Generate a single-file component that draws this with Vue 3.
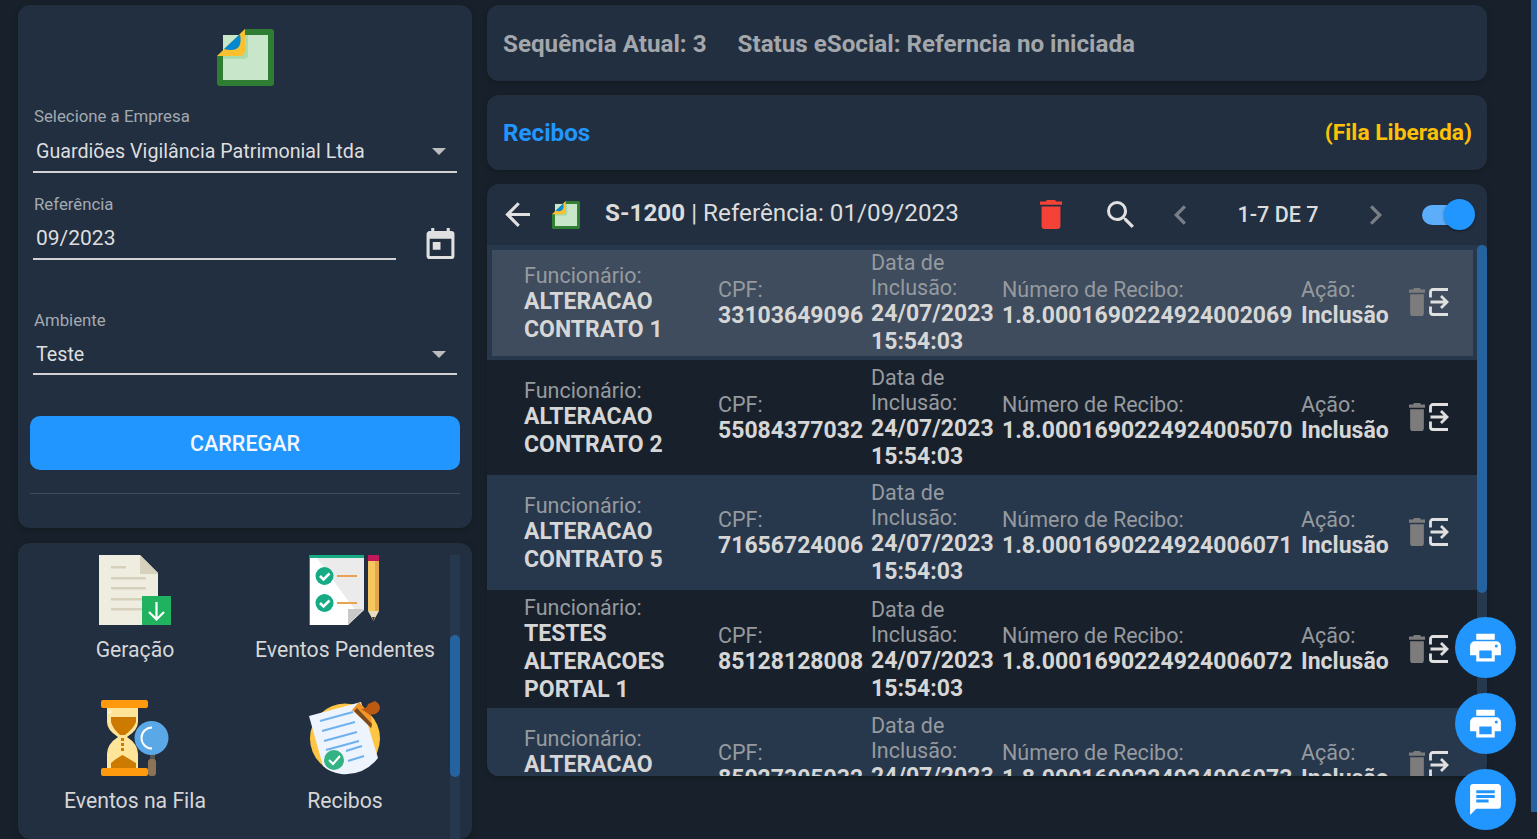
<template>
  <div class="page">
    <svg class="sprite" aria-hidden="true">
      <symbol id="esocial-logo" viewBox="0 0 57 57">
        <path d="M0 27 28 0H54A3 3 0 0 1 57 3V54A3 3 0 0 1 54 57H3A3 3 0 0 1 0 54z" fill="#2e7d32" />
        <rect x="6" y="6" width="45" height="45" fill="#c8e6c9" />
        <path d="M6 27 28 6h3v22l-3 2H6z" fill="#a9dbae" />
        <path d="M0 27 28 0v21q0 6-6 6z" fill="#fbc02d" />
        <path d="M7 20 23 5q3 16-9 16-4 0-7-1z" fill="#0288d1" />
      </symbol>
    </svg>

    <aside class="side">
      <section class="panel form-panel">
        <svg class="logo" width="57" height="57"><use href="#esocial-logo" /></svg>

        <div class="field">
          <span class="field-label">Selecione a Empresa</span>
          <div class="field-value value-company">
            <span>Guardiões Vigilância Patrimonial Ltda</span>
            <i class="caret"></i>
          </div>
        </div>

        <div class="field-row">
          <div class="field grow">
            <span class="field-label">Referência</span>
            <div class="field-value value-date">
              <span>09/2023</span>
            </div>
          </div>
          <svg class="calendar" viewBox="3 1 18 20" width="29" height="31" fill="#e0e0e0">
            <path d="M7,10H12V15H7M19,19H5V8H19M19,3H18V1H16V3H8V1H6V3H5C3.89,3 3,3.9 3,5V19A2,2 0 0,0 5,21H19A2,2 0 0,0 21,19V5A2,2 0 0,0 19,3Z" />
          </svg>
        </div>

        <div class="field field-env">
          <span class="field-label">Ambiente</span>
          <div class="field-value value-company">
            <span>Teste</span>
            <i class="caret"></i>
          </div>
        </div>

        <button class="load-btn">CARREGAR</button>
        <hr class="divider" />
      </section>

      <section class="panel menu-panel">
        <div class="menu-grid">
          <div class="menu-item">
            <svg class="menu-icon" width="72" height="70" viewBox="0 0 72 70">
              <path d="M0 0H41L59 18V70H0z" fill="#efece0" />
              <path d="M41 0 59 18v1H41z" fill="#d5d1bd" />
              <g fill="#d5d1bd">
                <rect x="12" y="11" width="15" height="2.5" />
                <rect x="12" y="22" width="35" height="2.5" />
                <rect x="12" y="32" width="35" height="2.5" />
                <rect x="12" y="43" width="35" height="2.5" />
                <rect x="12" y="53" width="35" height="2.5" />
              </g>
              <rect x="43" y="41" width="29" height="29" fill="#21b25f" />
              <path d="M57.5 47V64M50 57l7.5 7.5L65 57" fill="none" stroke="#fff" stroke-width="2.2" />
            </svg>
            <span>Geração</span>
          </div>

          <div class="menu-item">
            <svg class="menu-icon" width="72" height="70" viewBox="0 0 72 70">
              <path d="M0 0H55V55L39 70H0z" fill="#fff" />
              <path d="M8 3H55V55H46z" fill="#ebebeb" />
              <path d="M39 70V54H55z" fill="#c9c9c9" />
              <rect width="55" height="3" fill="#16ab84" />
              <rect width="1" height="70" fill="#5a7080" />
              <g v-for="y in [21, 48]" :key="y">
                <circle cx="15.5" :cy="y" r="9" fill="#16ab84" />
                <path :d="`M11 ${y}l3.5 3.5 6-6`" fill="none" stroke="#fff" stroke-width="2.6" />
                <rect x="28" :y="y - 1" width="20" height="2" fill="#e9a24e" />
              </g>
              <rect x="59" width="11" height="6" fill="#c2185b" />
              <rect x="59" y="6" width="11" height="50" fill="#f7c75f" />
              <rect x="66" y="6" width="4" height="50" fill="#e2a84d" />
              <path d="M59 56h11l-5.5 10z" fill="#e8dcc0" />
              <path d="M63 62h3l-1.5 4z" fill="#4a3b1a" />
            </svg>
            <span>Eventos Pendentes</span>
          </div>

          <div class="menu-item">
            <svg class="menu-icon" width="70" height="76" viewBox="0 0 70 76">
              <path d="M7 8H38V22Q38 30 27 37 38 44 38 54V68H7V54Q7 44 18 37 7 30 7 22z" fill="#ffe49a" />
              <path d="M11 17H36V22Q34 28 25 35H20Q13 29 11 22z" fill="#cc7a00" />
              <path d="M11 68V63Q14 60 22.500 55 31 60 36 63V68z" fill="#cc7a00" />
              <rect x="21" y="38" width="3" height="3" fill="#cc7a00" />
              <rect x="21" y="43" width="3" height="3" fill="#cc7a00" />
              <rect x="21" y="48" width="3" height="3" fill="#cc7a00" />
              <rect x="1" width="47" height="8" rx="2" fill="#ff9a0e" />
              <rect x="1" y="68" width="47" height="8" rx="2" fill="#ff9a0e" />
              <circle cx="10" cy="12" r="2" fill="#fff3c8" />
              <rect x="50" y="54" width="5" height="6" fill="#555" />
              <rect x="48" y="59" width="8" height="17" rx="3" fill="#8d7355" />
              <circle cx="51.500" cy="38" r="17" fill="#5aa9e6" />
              <path d="M52 27.500A10.500 10.500 0 0 0 52 48.500" fill="none" stroke="#fff" stroke-width="2" />
            </svg>
            <span>Eventos na Fila</span>
          </div>

          <div class="menu-item">
            <svg class="menu-icon" width="72" height="76" viewBox="0 0 72 76">
              <circle cx="36" cy="38.500" r="35" fill="#fdc543" />
              <path d="M0 16 52 2 69 58Q55 76 32 74 20 72 14 66z" fill="#edf4fe" />
              <g stroke="#6fb1ee" stroke-width="2.200">
                <path d="M11 21 44 12M13 31 46 22M15 41 48 32M17 50 50 41M37 51 53 46M39 61 55 56" />
              </g>
              <circle cx="25" cy="60" r="10" fill="#33b384" />
              <path d="M20 60l4 4 7-8" fill="none" stroke="#fff" stroke-width="2" />
              <path d="M43 10 50 2 62 15 63 28z" fill="#f2962c" />
              <path d="M45 11 62 28l1-4-15-16z" fill="#7a4a1f" />
              <path d="M55 10 62 16 60 11z" fill="#bb5a10" />
              <path d="M52 9Q58 9 59 4L66 1Q73 5 70 11 66 16 60 14z" fill="#bb5a10" />
            </svg>
            <span>Recibos</span>
          </div>
        </div>
        <div class="side-scroll"><div class="side-thumb"></div></div>
      </section>
    </aside>

    <main class="content">
      <section class="panel bar">
        <span class="bar-text">Sequência Atual: 3</span>
        <span class="bar-text">Status eSocial: Referncia no iniciada</span>
      </section>

      <section class="panel bar bar-spread">
        <span class="bar-title">Recibos</span>
        <span class="bar-queue">(Fila Liberada)</span>
      </section>

      <section class="panel list">
        <header class="list-head">
          <svg class="ic-back" viewBox="4 4 16 16" width="25" height="25" fill="#e0e0e0">
            <path d="M20,11V13H8L13.5,18.5L12.08,19.92L4.16,12L12.08,4.08L13.5,5.5L8,11H20Z" />
          </svg>
          <svg class="ic-logo" width="28" height="28"><use href="#esocial-logo" /></svg>
          <h2 class="list-title"><b>S-1200</b> | Referência: 01/09/2023</h2>
          <svg class="ic-trash" viewBox="5 3 14 18" width="22" height="29" preserveAspectRatio="none" fill="#f44336">
            <path d="M19,4H15.5L14.5,3H9.5L8.5,4H5V6H19M6,19A2,2 0 0,0 8,21H16A2,2 0 0,0 18,19V7H6V19Z" />
          </svg>
          <svg class="ic-search" viewBox="3 3 17.500 17.500" width="27" height="27" fill="#e0e0e0">
            <path d="M9.5,3A6.5,6.5 0 0,1 16,9.5C16,11.11 15.41,12.59 14.44,13.73L14.71,14H15.5L20.5,19L19,20.5L14,15.5V14.71L13.73,14.44C12.59,15.41 11.11,16 9.5,16A6.5,6.5 0 0,1 3,9.5A6.5,6.5 0 0,1 9.5,3M9.5,5C7,5 5,7 5,9.5C5,12 7,14 9.5,14C12,14 14,12 14,9.5C14,7 12,5 9.5,5Z" />
          </svg>
          <svg class="ic-prev" viewBox="8 6 7.410 12" width="12" height="20" fill="#7a7f86">
            <path d="M15.41,16.58L10.83,12L15.41,7.41L14,6L8,12L14,18L15.41,16.58Z" />
          </svg>
          <span class="pager">1-7 DE 7</span>
          <svg class="ic-next" viewBox="8.590 6 7.410 12" width="12" height="20" fill="#7a7f86">
            <path d="M8.59,16.58L13.17,12L8.59,7.41L10,6L16,12L10,18L8.59,16.58Z" />
          </svg>
          <div class="switch"><i class="switch-knob"></i></div>
        </header>

        <div class="list-body">
          <div class="rows">
            <article
              v-for="(row, i) in rows"
              :key="row.cpf"
              class="row"
              :class="{ 'row--alt': i % 2 === 0, 'row--active': i === 0 }"
            >
              <div class="row-inner">
                <div class="cell">
                  <span class="cell-label">Funcionário:</span>
                  <strong class="cell-value">{{ row.name }}</strong>
                </div>
                <div class="cell">
                  <span class="cell-label">CPF:</span>
                  <strong class="cell-value">{{ row.cpf }}</strong>
                </div>
                <div class="cell">
                  <span class="cell-label">Data de Inclusão:</span>
                  <strong class="cell-value">24/07/2023 15:54:03</strong>
                </div>
                <div class="cell">
                  <span class="cell-label">Número de Recibo:</span>
                  <strong class="cell-value">{{ row.receipt }}</strong>
                </div>
                <div class="cell">
                  <span class="cell-label">Ação:</span>
                  <strong class="cell-value">Inclusão</strong>
                </div>
                <div class="row-actions">
                  <svg viewBox="5 3 14 18" width="16" height="28" preserveAspectRatio="none" fill="#7c7c7c">
                    <path d="M19,4H15.5L14.5,3H9.5L8.5,4H5V6H19M6,19A2,2 0 0,0 8,21H16A2,2 0 0,0 18,19V7H6V19Z" />
                  </svg>
                  <svg viewBox="0 0 20 28" width="20" height="28" fill="none" stroke="#e0e0e0" stroke-width="2.800">
                    <path d="M19 1.500H4A2.500 2.500 0 0 0 1.500 4V9.500M1.500 18.500V24A2.500 2.500 0 0 0 4 26.500H19M1.500 14H18M12 8l6 6-6 6" />
                  </svg>
                </div>
              </div>
            </article>
          </div>
          <div class="list-scroll"><div class="list-thumb"></div></div>
        </div>
      </section>
    </main>

    <div class="page-scroll"><div class="page-thumb"></div></div>

    <div class="fabs">
      <button class="fab">
        <svg viewBox="0 0 24 24" width="37" height="37" fill="#fff"><path :d="printerPath" /></svg>
      </button>
      <button class="fab">
        <svg viewBox="0 0 24 24" width="37" height="37" fill="#fff"><path :d="printerPath" /></svg>
      </button>
      <button class="fab">
        <svg viewBox="0 0 24 24" width="37" height="37" fill="#fff">
          <path d="M20,2H4A2,2 0 0,0 2,4V22L6,18H20A2,2 0 0,0 22,16V4C22,2.89 21.1,2 20,2M6,9H18V11H6M14,14H6V12H14M18,8H6V6H18" />
        </svg>
      </button>
    </div>
  </div>
</template>

<script setup>
const printerPath =
  'M18,3H6V7H18M19,12A1,1 0 0,1 18,11A1,1 0 0,1 19,10A1,1 0 0,1 20,11A1,1 0 0,1 19,12M16,19H8V14H16M19,8H5A3,3 0 0,0 2,11V17H6V21H18V17H22V11A3,3 0 0,0 19,8Z'

const rows = [
  { name: 'ALTERACAO CONTRATO 1', cpf: '33103649096', receipt: '1.8.0001690224924002069' },
  { name: 'ALTERACAO CONTRATO 2', cpf: '55084377032', receipt: '1.8.0001690224924005070' },
  { name: 'ALTERACAO CONTRATO 5', cpf: '71656724006', receipt: '1.8.0001690224924006071' },
  { name: 'TESTES ALTERACOES PORTAL 1', cpf: '85128128008', receipt: '1.8.0001690224924006072' },
  { name: 'ALTERACAO CONTRATO 6', cpf: '85027305032', receipt: '1.8.0001690224924006073' },
]
</script>

<style>
html,
body {
  margin: 0;
  height: 100%;
  overflow: hidden;
  background: #18212b;
}
</style>

<style scoped>
.page {
  display: flex;
  gap: 15px;
  height: 839px;
  padding: 5px 0 0 18px;
  box-sizing: border-box;
  overflow: hidden;
  position: relative;
  font-family: Roboto, "Liberation Sans", sans-serif;
  color: #dcdcdc;
}

.sprite {
  position: absolute;
  width: 0;
  height: 0;
}

.panel {
  background: #212f41;
  border-radius: 12px;
  box-shadow: 0 2px 6px rgba(0, 0, 0, 0.25);
}

.side {
  width: 454px;
  flex: none;
  display: flex;
  flex-direction: column;
  gap: 15px;
}

.form-panel {
  height: 523px;
  box-sizing: border-box;
  padding: 24px 15px 0 12px;
  display: flex;
  flex-direction: column;
}

.logo {
  align-self: center;
  margin-left: 3px;
  flex: none;
}

.field {
  margin-left: 3px;
  margin-top: 21px;
}

.field-row {
  display: flex;
  align-items: flex-end;
  gap: 30px;
  margin-top: 23px;
}

.field-row .field {
  margin-top: 0;
}

.grow {
  flex: 1;
}

.calendar {
  margin-right: 2px;
  flex: none;
}

.field-env {
  margin-top: 52px;
}

.field-label {
  display: block;
  margin-left: 1px;
  font-size: 16.800px;
  line-height: 19px;
  color: #a4a9af;
}

.field-value {
  display: flex;
  align-items: center;
  justify-content: space-between;
  height: 39px;
  padding: 6px 11px 0 3px;
  box-sizing: content-box;
  margin-bottom: -1px;
  border-bottom: 2px solid #d2d2d2;
  color: #dedede;
}

.value-date {
  padding-top: 4px;
  height: 40px;
}

.field-env .field-value {
  height: 37px;
  padding-top: 6px;
}

.value-company {
  font-size: 19.700px;
}

.value-date {
  font-size: 21px;
}

.caret {
  width: 0;
  height: 0;
  border-left: 7px solid transparent;
  border-right: 7px solid transparent;
  border-top: 7px solid #bdbdbd;
}

.load-btn {
  display: block;
  width: 430px;
  height: 54px;
  margin-top: 42px;
  border: 0;
  border-radius: 10px;
  background: #2196ff;
  color: #f2f7fd;
  font: 500 21.500px Roboto, sans-serif;
}

.divider {
  width: 430px;
  margin: 23px 0 0;
  border: 0;
  border-top: 1px solid rgba(255, 255, 255, 0.14);
}

.menu-panel {
  flex: 1;
  display: flex;
  padding: 12px 12px 0 0;
  min-height: 0;
}

.menu-grid {
  flex: 1;
  display: grid;
  grid-template-columns: 210px 210px;
  grid-auto-rows: 145px;
  padding-left: 12px;
  align-content: start;
}

.menu-item {
  display: flex;
  flex-direction: column;
  align-items: center;
  font-size: 21.200px;
  color: #d6d6d6;
}

.menu-item span {
  margin-top: 13px;
  line-height: 24px;
  white-space: nowrap;
}

.side-scroll {
  width: 10px;
  background: #26384e;
  padding-top: 80px;
}

.side-thumb {
  height: 142px;
  border-radius: 5px;
  background: #2563a0;
}

.content {
  width: 1000px;
  flex: none;
  display: flex;
  flex-direction: column;
  gap: 14px;
  align-self: flex-start;
}

.bar {
  display: flex;
  align-items: center;
  gap: 31px;
  height: 76px;
  padding: 2px 15px 0 16px;
  box-sizing: border-box;
}

.bar-spread {
  height: 75px;
  padding-top: 0;
  justify-content: space-between;
}

.bar-text {
  font-size: 24.200px;
  font-weight: 700;
  color: #a3a6aa;
}

.bar-title {
  font-size: 24.200px;
  font-weight: 700;
  color: #2196ff;
}

.bar-queue {
  font-size: 22.800px;
  font-weight: 700;
  color: #ffc107;
}

.list {
  height: 592px;
  overflow: hidden;
  display: flex;
  flex-direction: column;
}

.list-head {
  height: 61px;
  flex: none;
  display: flex;
  align-items: center;
  padding: 0 12px 0 18px;
}

.ic-logo {
  margin-left: 22px;
}

.list-title {
  margin: 0 0 3px 25px;
  width: 435px;
  font-size: 24.250px;
  font-weight: 400;
  color: #dcdcdc;
  white-space: nowrap;
}

.ic-search {
  margin-left: 45px;
}

.ic-prev {
  margin-left: 40px;
}

.pager {
  width: 184px;
  text-align: center;
  font-size: 21.500px;
  font-weight: 500;
  color: #dcdcdc;
}

.switch {
  position: relative;
  width: 48px;
  height: 20px;
  margin-left: 40px;
  border-radius: 10px;
  background: #5caefb;
}

.switch-knob {
  position: absolute;
  right: -5px;
  top: -6px;
  width: 31px;
  height: 31px;
  border-radius: 50%;
  background: #2196ff;
  box-shadow: 0 1px 3px rgba(0, 0, 0, 0.4);
}

.list-body {
  flex: 1;
  display: flex;
  min-height: 0;
}

.rows {
  flex: 1;
  min-width: 0;
}

.row {
  background: #18212b;
  padding: 5px 4px 4px 5px;
}

.row--alt {
  background: #27384d;
}

.row-inner {
  display: grid;
  grid-template-columns: 194px 153px 131px 299px 108px 1fr;
  align-items: center;
  padding-left: 32px;
}

.row--active .row-inner {
  background: #3e4c5d;
}

.cell {
  display: flex;
  flex-direction: column;
}

.cell-label {
  font-size: 21.500px;
  line-height: 25px;
  color: #969a9f;
}

.cell-value {
  font-size: 23px;
  line-height: 28px;
  font-weight: 700;
  color: #d6d6d6;
}

.row-actions {
  display: flex;
  gap: 4px;
  margin-top: -2px;
}

.list-scroll {
  width: 10px;
  flex: none;
  background: #26384e;
}

.list-thumb {
  height: 348px;
  border-radius: 5px;
  background: #2563a0;
}

.page-scroll {
  position: absolute;
  top: 0;
  right: 0;
  width: 6px;
  height: 812px;
  background: #2563a0;
}

.fabs {
  position: absolute;
  left: 1455px;
  top: 617px;
  display: flex;
  flex-direction: column;
  gap: 15px;
}

.fab {
  width: 61px;
  height: 61px;
  display: flex;
  align-items: center;
  justify-content: center;
  padding: 0;
  border: 0;
  border-radius: 50%;
  background: #2196ff;
}
</style>
